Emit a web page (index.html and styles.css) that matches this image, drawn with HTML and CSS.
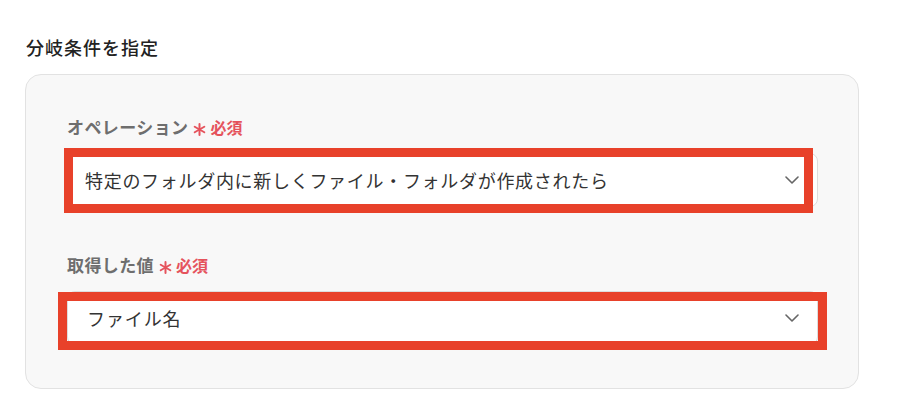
FILE: index.html
```html
<!DOCTYPE html>
<html lang="ja">
<head>
<meta charset="utf-8">
<link rel="stylesheet" href="styles.css">
</head>
<body>
<div class="page">
  <h2 class="title">分岐条件を指定</h2>
  <div class="card">
    <div class="field">
      <div class="label">オペレーション<span class="req"><svg class="ast" width="13" height="13" viewBox="0 0 13 13"><g stroke="#e5535c" stroke-width="2" stroke-linecap="round"><path d="M6.5 1 V12"/><path d="M1.7 3.75 L11.3 9.25"/><path d="M1.7 9.25 L11.3 3.75"/></g></svg>必須</span></div>
      <div class="select">
        <span class="value">特定のフォルダ内に新しくファイル・フォルダが作成されたら</span>
        <svg class="chev" width="14" height="8" viewBox="0 0 14 8"><path d="M1 1 L7 7 L13 1" fill="none" stroke="#666" stroke-width="1.6" stroke-linecap="round" stroke-linejoin="round"/></svg>
        <div class="mark mark1"></div>
      </div>
    </div>
    <div class="field">
      <div class="label">取得した値<span class="req"><svg class="ast" width="13" height="13" viewBox="0 0 13 13"><g stroke="#e5535c" stroke-width="2" stroke-linecap="round"><path d="M6.5 1 V12"/><path d="M1.7 3.75 L11.3 9.25"/><path d="M1.7 9.25 L11.3 3.75"/></g></svg>必須</span></div>
      <div class="select">
        <span class="value value2">ファイル名</span>
        <svg class="chev" width="14" height="8" viewBox="0 0 14 8"><path d="M1 1 L7 7 L13 1" fill="none" stroke="#666" stroke-width="1.6" stroke-linecap="round" stroke-linejoin="round"/></svg>
        <div class="mark mark2"></div>
      </div>
    </div>
  </div>
</div>
</body>
</html>
```

FILE: styles.css
```css
html, body {
  margin: 0;
  background: #ffffff;
}
body {
  font-family: "Noto Sans CJK JP", "Noto Sans", sans-serif;
  color: #333333;
}
.page {
  padding: 34px 0 0 25px;
}
.title {
  margin: 0 0 14px 1px;
  font-size: 18px;
  font-weight: 500;
  letter-spacing: 1px;
  line-height: 26px;
  color: #222222;
}
.card {
  box-sizing: border-box;
  width: 834px;
  height: 315px;
  border: 1px solid #e2e2e2;
  border-radius: 16px;
  background: #f8f8f8;
  padding: 40px 40px 0 41px;
  display: flex;
  flex-direction: column;
  gap: 46px;
}
.field {
  display: flex;
  flex-direction: column;
  gap: 14px;
}
.label {
  font-size: 17px;
  line-height: 24px;
  font-weight: 700;
  letter-spacing: 0.4px;
  color: #6e6e6e;
  display: flex;
  align-items: center;
}
.req {
  margin-left: 5px;
  font-size: 16px;
  font-weight: 700;
  letter-spacing: 0;
  color: #e5535c;
  display: flex;
  align-items: center;
}
.ast {
  display: block;
  margin-right: 4px;
  position: relative;
  top: 2px;
}
.select {
  position: relative;
  box-sizing: border-box;
  height: 54px;
  border: 1px solid #dddddd;
  border-radius: 8px;
  background: #ffffff;
  display: flex;
  align-items: center;
  justify-content: space-between;
  padding: 0 18px 0 17px;
}
.value {
  font-size: 18px;
  letter-spacing: 0.7px;
  color: #333333;
}
.value2 {
  padding-left: 2px;
  letter-spacing: 0.9px;
}
.chev {
  display: block;
}
.mark {
  position: absolute;
  box-sizing: border-box;
  border: 9px solid #e8412a;
  pointer-events: none;
}
.mark1 {
  left: -4px;
  top: -6px;
  width: 749px;
  height: 65px;
}
.mark2 {
  left: -10px;
  top: 0px;
  width: 769px;
  height: 58px;
}
```
